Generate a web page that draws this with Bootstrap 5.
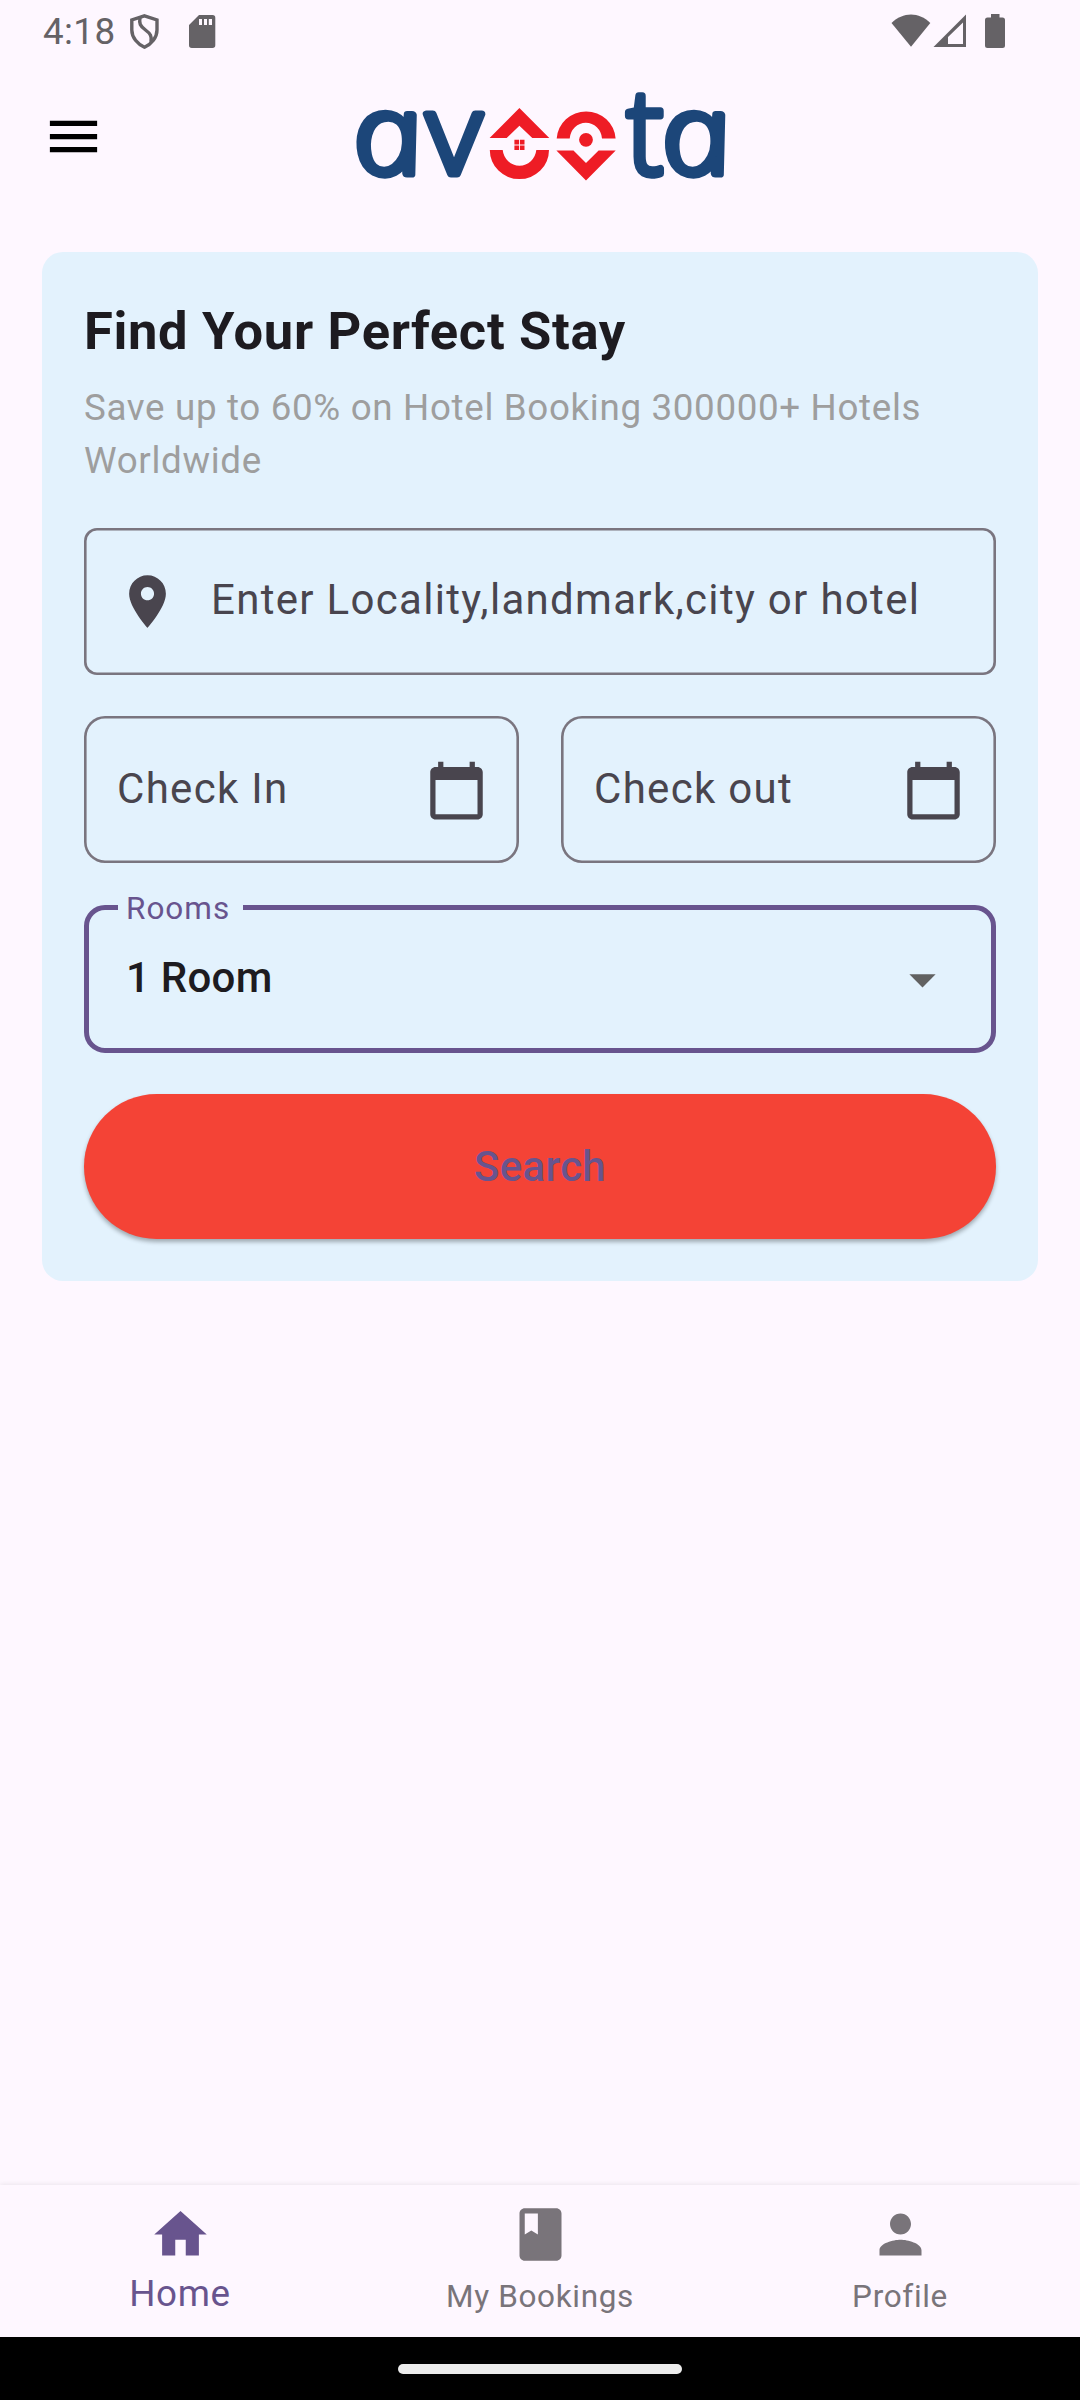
<!DOCTYPE html>
<html lang="en">
<head>
<meta charset="utf-8">
<meta name="viewport" content="width=device-width, initial-scale=1">
<title>Avoota</title>
<link href="https://cdn.jsdelivr.net/npm/bootstrap@5.3.0/dist/css/bootstrap.min.css" rel="stylesheet">
<style>
body{font-family:Roboto,"Liberation Sans",sans-serif;background:#fef7ff;color:#1d1b20;height:2400px;width:1080px;overflow:hidden}
svg{display:block;flex:none}
.statusbar{height:63px;padding:0 75px 0 43px;color:#656266}
.clock{font-size:36.75px;line-height:63px;width:87px;letter-spacing:.4px}
.sd{margin-left:29px}
.topbar{height:147px;padding-left:42px}
.menu{margin-top:42px;color:#000}
.logo{margin:-23px 0 0 195px}
.stay{margin:42px 42px 0;padding:42px;height:1029px;border-radius:21px;background:#e3f2fd}
.stay-title{font-size:52.5px;line-height:75px;letter-spacing:.66px;margin:0 0 13px}
.stay-sub{font-size:36.75px;line-height:52.5px;letter-spacing:.66px;color:#9e9e9e;margin:0;height:146px}
.field{height:147px;padding:0 31.5px 0 33px;font-size:42px;line-height:63px;letter-spacing:1.31px;color:#49454e;box-shadow:inset 0 0 0 2.6px #7a757f}
.place{border-radius:13px;padding-left:31.5px}
.place span{margin-left:32.5px;padding-bottom:4px}
.dates{gap:42px;margin-top:41px}
.dates .field{flex:1 1 0;border-radius:21px}
.dates span{padding-bottom:2px}
.dates .ic{margin-top:1px}
.ic{width:63px;height:63px;fill:currentColor}
.rooms{height:148px;border:5px solid #68548e;border-radius:21px;margin-top:42px;padding:0 37px;position:relative;font-size:42px;font-weight:500;letter-spacing:.26px}
.rooms>span{padding-bottom:3px}
.rooms .ic{color:#616161}
.rooms-label{position:absolute;left:29px;top:-22px;width:125px;height:42px;line-height:42px;padding-left:8px;background:#e3f2fd;color:#68548e;font-size:31.5px;font-weight:400;letter-spacing:.98px}
.search{height:145px;margin-top:41px;padding:0 0 1px;border:0;border-radius:73px;background:#f44336;color:#68548e;font-size:42px;font-weight:500;letter-spacing:.26px;box-shadow:0 3px 4px rgba(0,0,0,.3)}
.tabs{height:152px;box-shadow:0 -1px 5px rgba(0,0,0,.08);color:#79747a;font-size:31.5px;letter-spacing:.66px;background:#fef7ff}
.tabs>a{color:inherit;text-decoration:none;padding-top:18px;width:360px}
.tabs>a.on{color:#68548e;font-size:36.75px}
.tabs span{line-height:43px;margin-top:9px}
.tabs .on span{margin-top:6px}
.homebar{height:63px;background:#000}
.pill{width:284px;height:10px;border-radius:5px;background:#ececec}
</style>
<script src="https://cdn.jsdelivr.net/npm/bootstrap@5.3.0/dist/js/bootstrap.bundle.min.js"></script>
</head>
<body class="d-flex flex-column">
<header>
  <div class="statusbar d-flex align-items-start">
    <div class="clock">4:18</div>
    <svg width="30" height="63" viewBox="0 0 30 63" fill="none" stroke="currentColor" stroke-width="3.4"><path d="M14.5 15.8 27 20v10c0 7.500-5.500 14-12.500 17.200C7.500 44 1.800 37.500 1.800 30V20Z"/><path d="M10 17.500c-1 6 0 8.500 5.500 12.500 5 3.700 6.500 6 5.500 12"/></svg>
    <svg class="sd" width="27" height="63" viewBox="0 0 27 63" fill="currentColor"><path fill-rule="evenodd" d="M10 15h13.500a2.800 2.800 0 0 1 2.800 2.800v27.400a2.800 2.800 0 0 1-2.800 2.800H2.800A2.800 2.800 0 0 1 0 45.200V25ZM10 19v6h3v-6Zm5 0v6h3v-6Zm4.800 0v6H23v-6Z"/></svg>
    <svg class="ms-auto" width="116" height="63" viewBox="0 0 116 63" fill="currentColor"><path d="M2.500 23C14 11.500 30 11.500 41.300 23L22 46.700Z"/><path fill-rule="evenodd" d="M44.500 47 77 14.500V47ZM59 44H74V22.500L59 37Z"/><path d="M102 14h8.500v3.500h3a2.500 2.500 0 0 1 2.500 2.500v25.500a2.500 2.500 0 0 1-2.500 2.500H98.500a2.500 2.500 0 0 1-2.500-2.500V20a2.500 2.500 0 0 1 2.500-2.500H102Z"/></svg>
  </div>
  <div class="topbar d-flex align-items-start">
    <svg class="ic menu" viewBox="0 0 24 24"><path d="M3 18h18v-2H3v2zm0-5h18v-2H3v2zm0-7v2h18V6H3z"/></svg>
    <svg class="logo" width="480" height="170" viewBox="-40 -40 480 170" role="img" aria-label="avoota">
      <g fill="#1c4679" stroke="#1c4679" stroke-width="7" stroke-linejoin="round" font-family="'Open Sans'" font-weight="300" font-size="111">
        <text font-style="italic" transform="translate(19.500 94) skewX(12) scale(1.130 1.010)">a</text>
        <text transform="translate(86.500 93.500) scale(1.080 1.020)">v</text>
        <text transform="translate(287 94) scale(.98 1.070)">t</text>
        <text font-style="italic" transform="translate(328 94) skewX(12) scale(1.130 1.010)">a</text>
      </g>
      <g fill="#ee1c25">
        <path d="M179.400 28 209.300 58H192.300L179.400 45.700 166.700 58H149.600Z"/>
        <path d="M149.800 70h12.900a16.900 17.600 0 0 0 33.600 0H209a29.500 29 0 0 1-59.200 0Z"/>
        <path d="M174.400 59.800h4.600v4.600h-4.600zM179.900 59.800h4.600v4.600h-4.600zM174.400 65.400h4.600v4.600h-4.600zM179.900 65.400h4.600v4.600h-4.600z"/>
        <path d="M216.700 58.600a29.500 28.800 0 0 1 58.900 0H262a16.200 17.200 0 0 0-32.300 0Z"/>
        <circle cx="246" cy="59.800" r="6.900"/>
        <path d="M216.400 70.600H233.500L246 83 258.600 70.600H275.700L246 100.400Z"/>
      </g>
    </svg>
  </div>
</header>
<main class="flex-grow-1">
  <section class="stay">
    <h1 class="stay-title fw-bold">Find Your Perfect Stay</h1>
    <p class="stay-sub">Save up to 60% on Hotel Booking 300000+ Hotels Worldwide</p>
    <div class="field place d-flex align-items-center">
      <svg class="ic" viewBox="0 0 24 24"><path d="M12 2C8.130 2 5 5.130 5 9c0 5.250 7 13 7 13s7-7.750 7-13c0-3.870-3.130-7-7-7zm0 9.500c-1.380 0-2.500-1.120-2.500-2.500s1.120-2.500 2.500-2.500 2.500 1.120 2.500 2.500-1.120 2.500-2.500 2.500z"/></svg>
      <span>Enter Locality,landmark,city or hotel</span>
    </div>
    <div class="dates d-flex">
      <div class="field d-flex align-items-center justify-content-between"><span>Check In</span>
        <svg class="ic" viewBox="0 0 24 24"><path d="M20 3h-1V1h-2v2H7V1H5v2H4c-1.100 0-2 .9-2 2v16c0 1.100.9 2 2 2h16c1.100 0 2-.9 2-2V5c0-1.100-.9-2-2-2zm0 18H4V8h16v13z"/></svg></div>
      <div class="field d-flex align-items-center justify-content-between"><span>Check out</span>
        <svg class="ic" viewBox="0 0 24 24"><path d="M20 3h-1V1h-2v2H7V1H5v2H4c-1.100 0-2 .9-2 2v16c0 1.100.9 2 2 2h16c1.100 0 2-.9 2-2V5c0-1.100-.9-2-2-2zm0 18H4V8h16v13z"/></svg></div>
    </div>
    <div class="rooms d-flex align-items-center justify-content-between">
      <div class="rooms-label">Rooms</div>
      <span>1 Room</span>
      <svg class="ic" viewBox="0 0 24 24"><path d="M7 10l5 5 5-5z"/></svg>
    </div>
    <button class="search w-100 d-block">Search</button>
  </section>
</main>
<nav class="tabs d-flex">
  <a href="#" class="on d-flex flex-column align-items-center"><svg class="ic" viewBox="0 0 24 24"><path d="M10 20v-6h4v6h5v-8h3L12 3 2 12h3v8z"/></svg><span>Home</span></a>
  <a href="#" class="d-flex flex-column align-items-center"><svg class="ic" viewBox="0 0 24 24"><path d="M18 2H6c-1.100 0-2 .9-2 2v16c0 1.100.9 2 2 2h12c1.100 0 2-.9 2-2V4c0-1.100-.9-2-2-2zM6 4h5v8l-2.500-1.500L6 12V4z"/></svg><span>My Bookings</span></a>
  <a href="#" class="d-flex flex-column align-items-center"><svg class="ic" viewBox="0 0 24 24"><path d="M12 12c2.210 0 4-1.790 4-4s-1.790-4-4-4-4 1.790-4 4 1.790 4 4 4zm0 2c-2.670 0-8 1.340-8 4v2h16v-2c0-2.660-5.330-4-8-4z"/></svg><span>Profile</span></a>
</nav>
<div class="homebar d-flex justify-content-center align-items-center"><div class="pill"></div></div>
</body>
</html>
